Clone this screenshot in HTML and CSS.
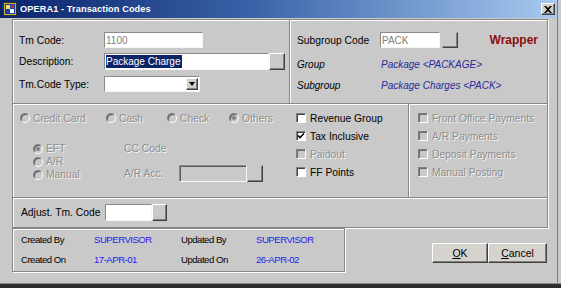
FILE: index.html
```html
<!DOCTYPE html>
<html>
<head>
<meta charset="utf-8">
<link rel="stylesheet" href="styles.css">
</head>
<body>
<div class="screen">
<div class="window">
  <div class="titlebar">
    <svg class="appicon" width="14" height="14" viewBox="0 0 14 14">
      <rect x="0.5" y="0.5" width="13" height="13" fill="#c8b040" stroke="#303030"/>
      <rect x="2" y="2" width="10" height="10" fill="#1c3fa8"/>
      <rect x="3" y="3" width="4" height="4" fill="#f0e060"/>
      <rect x="7" y="7" width="4" height="4" fill="#ffffff"/>
      <rect x="8" y="3" width="3" height="3" fill="#d03030"/>
    </svg>
    <span class="title">OPERA1 - Transaction Codes</span>
    <span class="closebtn">
      <svg width="8" height="7" viewBox="0 0 8 7"><path d="M0 0 L2 0 L4 2 L6 0 L8 0 L5 3.5 L8 7 L6 7 L4 5 L2 7 L0 7 L3 3.5 Z" fill="#000"/></svg>
    </span>
  </div>
  <div class="client">
    <div class="panel">
      <div class="sec sec-top">
        <div class="tl">
          <div class="frow r1"><span class="lbl">Tm Code:</span><div class="field f-code">1100</div></div>
          <div class="frow r2"><span class="lbl">Description:</span><div class="field f-desc"><span class="sel">Package Charge</span></div><div class="lov lov-desc"></div></div>
          <div class="frow r3"><span class="lbl">Tm.Code Type:</span><div class="field f-type"><span class="ddbtn"><i class="tri"></i></span></div></div>
        </div>
        <div class="tr">
          <div class="frow r1"><span class="lbl2">Subgroup Code</span><div class="field f-sub">PACK</div><div class="lov lov-sub"></div><span class="wrapper">Wrapper</span></div>
          <div class="irow g1"><span class="ilbl">Group</span><span class="ival">Package &lt;PACKAGE&gt;</span></div>
          <div class="irow g2"><span class="ilbl">Subgroup</span><span class="ival">Package Charges &lt;PACK&gt;</span></div>
        </div>
      </div>
      <div class="sec sec-mid">
        <div class="ma">
          <div class="radios">
            <div class="radio w-cc"><i class="rb"></i><span class="dis">Credit Card</span></div>
            <div class="radio w-cash"><i class="rb"></i><span class="dis">Cash</span></div>
            <div class="radio w-check"><i class="rb"></i><span class="dis">Check</span></div>
            <div class="radio"><i class="rb on"></i><span class="dis">Others</span></div>
          </div>
          <div class="sub">
            <div class="subradios">
              <div class="radio srow"><i class="rb on"></i><span class="dis">EFT</span></div>
              <div class="radio srow"><i class="rb"></i><span class="dis">A/R</span></div>
              <div class="radio srow"><i class="rb"></i><span class="dis">Manual</span></div>
            </div>
            <div class="acc">
              <div class="dis ccrow">CC Code</div>
              <div class="accrow"><span class="dis acclbl">A/R Acc.</span><div class="field dfield f-acc"></div><div class="lov lov-acc"></div></div>
            </div>
          </div>
        </div>
        <div class="checks c1">
          <div class="crow"><i class="cb"></i><span>Revenue Group</span></div>
          <div class="crow"><i class="cb"><svg width="8" height="8" viewBox="0 0 8 8"><path d="M1 3.5 L3 5.5 L7 1.5" fill="none" stroke="#000" stroke-width="1.6"/></svg></i><span>Tax Inclusive</span></div>
          <div class="crow"><i class="cb off"></i><span class="dis">Paidout</span></div>
          <div class="crow"><i class="cb"></i><span>FF Points</span></div>
        </div>
        <div class="checks c2">
          <div class="crow"><i class="cb off"></i><span class="dis">Front Office Payments</span></div>
          <div class="crow"><i class="cb off"></i><span class="dis">A/R Payments</span></div>
          <div class="crow"><i class="cb off"></i><span class="dis">Deposit Payments</span></div>
          <div class="crow"><i class="cb off"></i><span class="dis">Manual Posting</span></div>
        </div>
      </div>
      <div class="sec sec-adj">
        <span class="lbl adjlbl">Adjust. Tm. Code</span><div class="field f-adj"></div><div class="lov lov-adj"></div>
      </div>
    </div>
    <div class="footer">
      <div class="info">
        <div class="irow2"><span class="k k1">Created By</span><span class="v v1">SUPERVISOR</span><span class="k k2">Updated By</span><span class="v">SUPERVISOR</span></div>
        <div class="irow2"><span class="k k1">Created On</span><span class="v v1">17-APR-01</span><span class="k k2">Updated On</span><span class="v">26-APR-02</span></div>
      </div>
      <div class="buttons">
        <div class="btn b-ok"><u>O</u>K</div>
        <div class="btn b-cancel"><u>C</u>ancel</div>
      </div>
    </div>
  </div>
</div>
</div>
</body>
</html>
```

FILE: styles.css
```css
* { box-sizing: border-box; }
html, body { margin: 0; padding: 0; }
body { background: #c9c9c9; }

.screen {
  width: 561px;
  height: 288px;
  overflow: hidden;
  background: linear-gradient(to bottom, #c9c9c9 283px, #8a8a8a 283px, #8a8a8a 284px, #2e2e2e 284px);
  font-family: "Liberation Sans", Arial, sans-serif;
  font-size: 10.3px;
  color: #000;
}

.window {
  width: 558px;
  height: 283px;
  border-right: 1px solid #808080;
  background: #c9c9c9;
}

/* title bar */
.titlebar {
  height: 18px;
  display: flex;
  align-items: center;
  padding-left: 3px;
  background: linear-gradient(to right, #0a246a 0%, #3a62a8 45%, #a6caf0 100%);
}
.appicon { flex: none; }
.title {
  margin-left: 3px;
  color: #fff;
  font-weight: bold;
  font-size: 9.2px;
  letter-spacing: 0.1px;
}
.closebtn {
  margin-left: auto;
  margin-right: 2px;
  width: 14px;
  height: 12px;
  display: flex;
  align-items: center;
  justify-content: center;
  background: #d4d0c8;
  border: 1px solid;
  border-color: #fff #404040 #404040 #fff;
  box-shadow: inset -1px -1px 0 #808080;
}

.client { padding: 1px 0 0 12px; }

/* etched panel */
.panel {
  width: 536px;
  border: 1px solid #868686;
  box-shadow: inset 1px 1px 0 #fff, 1px 1px 0 #fff;
}
.sec { display: flex; }
.sec-top { height: 83px; }
.sec-mid { height: 94px; border-top: 1px solid #868686; box-shadow: inset 0 1px 0 #fff; }
.sec-adj { height: 30px; border-top: 1px solid #868686; box-shadow: inset 0 1px 0 #fff; padding: 6px 0 0 8px; align-items: flex-start; }

.tl {
  width: 277px;
  border-right: 1px solid #868686;
  box-shadow: 1px 0 0 #fff;
  padding: 12px 0 0 6px;
}
.tr { flex: 1; padding: 12px 0 0 7px; }

.frow { display: flex; align-items: center; }
.frow.r1 { height: 16px; }
.tl .r2 { height: 17px; margin-top: 5px; }
.tl .r3 { height: 16px; margin-top: 6px; }
.lbl { width: 85px; flex: none; }
.lbl2 { width: 83px; flex: none; }

/* fields */
.field {
  background: #fff;
  border: 1px solid;
  border-color: #8a8a8a #f6f6f6 #f6f6f6 #8a8a8a;
  height: 100%;
  display: flex;
  align-items: center;
  padding-left: 1px;
  font-size: 10px;
  color: #808080;
  flex: none;
}
.f-code { width: 99px; }
.f-desc { width: 165px; color: #000; }
.f-type { width: 96px; justify-content: flex-end; padding: 1px; }
.f-sub { width: 60px; }
.f-acc { width: 68px; height: 17px; }
.f-adj { width: 47px; height: 17px; }
.dfield { background: #c9c9c9; box-shadow: inset 1px 1px 0 #5a5a5a; }

.sel {
  background: #0a246a;
  color: #fff;
  height: 13px;
  line-height: 13px;
  padding-right: 1px;
}

.lov {
  flex: none;
  width: 16px;
  background: #c9c9c9;
  border: 1px solid;
  border-color: #fff #404040 #404040 #fff;
  box-shadow: inset -1px -1px 0 #808080;
}
.lov-desc { height: 17px; }
.lov-sub { height: 16px; margin-left: 2px; border-color: #c9c9c9 #404040 #404040 #c9c9c9; }
.lov-acc { height: 17px; border-color: #c9c9c9 #404040 #404040 #c9c9c9; }
.lov-adj { height: 17px; width: 15px; }

.ddbtn {
  width: 12px;
  height: 12px;
  background: #d4d0c8;
  border: 1px solid;
  border-color: #fff #404040 #404040 #fff;
  box-shadow: inset -1px -1px 0 #808080;
  display: flex;
  align-items: center;
  justify-content: center;
}
.tri {
  width: 0;
  height: 0;
  border-left: 3.5px solid transparent;
  border-right: 3.5px solid transparent;
  border-top: 4px solid #000;
}

.wrapper {
  margin-left: auto;
  margin-right: 9px;
  color: #8b0d0d;
  font-weight: bold;
  font-size: 12px;
}

.irow { display: flex; align-items: center; height: 12px; font-style: italic; font-size: 10px; }
.irow.g1 { margin-top: 10px; }
.irow.g2 { margin-top: 9px; }
.ilbl { width: 84px; flex: none; color: #000; }
.ival { color: #2b2b9a; }

/* disabled text */
.dis { color: #8e8e8e; text-shadow: 1px 1px 0 #f4f4f4; }

/* middle section */
.ma { width: 283px; padding: 9px 0 0 7px; }
.radios { display: flex; height: 10px; }
.radio { display: flex; align-items: center; }
.w-cc { width: 86px; }
.w-cash { width: 61px; }
.w-check { width: 62px; }
.rb {
  flex: none;
  width: 10px;
  height: 10px;
  border-radius: 50%;
  border: 1px solid;
  border-color: #808080 #fff #fff #808080;
  box-shadow: inset 1px 1px 0 #5a5a5a;
  background: #c9c9c9;
  margin-right: 3px;
  display: flex;
  align-items: center;
  justify-content: center;
}
.rb.on::after {
  content: "";
  width: 4px;
  height: 4px;
  border-radius: 50%;
  background: #808080;
}

.sub { display: flex; margin-top: 19px; margin-left: 13px; }
.subradios { width: 91px; }
.srow { height: 13px; }
.acc { flex: 1; }
.ccrow { height: 13px; display: flex; align-items: center; }
.accrow { display: flex; align-items: center; margin-top: 10px; height: 17px; }
.acclbl { width: 55px; flex: none; }

.checks { padding-top: 5px; }
.c1 { width: 113px; border-right: 1px solid #868686; box-shadow: 1px 0 0 #fff; }
.c2 { flex: 1; padding-left: 9px; }
.crow { height: 18px; display: flex; align-items: center; }
.cb {
  flex: none;
  width: 10px;
  height: 10px;
  background: #fff;
  border: 1px solid;
  border-color: #808080 #fff #fff #808080;
  box-shadow: inset 1px 1px 0 #404040;
  margin-right: 4px;
  display: flex;
  align-items: center;
  justify-content: center;
}
.cb.off { background: #c9c9c9; box-shadow: inset 1px 1px 0 #6a6a6a; }
.cb svg { display: block; }

.adjlbl { width: 84px; height: 17px; display: flex; align-items: center; }

/* footer */
.footer { display: flex; justify-content: space-between; width: 536px; padding-right: 1px; }
.info {
  width: 333px;
  height: 44px;
  border: 1px solid #868686;
  box-shadow: inset 1px 1px 0 #fff, 1px 1px 0 #fff;
  padding: 2px 0 0 8px;
  font-size: 9.6px;
  letter-spacing: -0.5px;
}
.irow2 { display: flex; align-items: center; height: 16px; }
.irow2 + .irow2 { margin-top: 4px; }
.k1 { width: 73px; }
.v1 { width: 87px; }
.k2 { width: 75px; }
.v { color: #2222f0; }

.buttons { display: flex; margin-top: 15px; height: 20px; }
.btn {
  height: 20px;
  background: #d6d3ce;
  border: 1px solid;
  border-color: #fff #404040 #404040 #fff;
  box-shadow: inset -1px -1px 0 #808080;
  display: flex;
  align-items: center;
  justify-content: center;
  font-size: 10.5px;
}
.b-ok { width: 56px; }
.b-cancel { width: 59px; }
```
